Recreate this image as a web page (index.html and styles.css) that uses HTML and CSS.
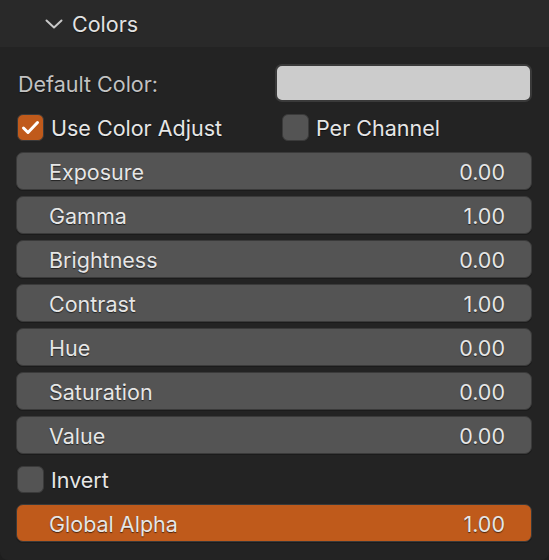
FILE: index.html
```html
<!DOCTYPE html>
<html lang="en">
<head>
  <meta charset="UTF-8">
  <title>Colors</title>
  <link rel="stylesheet" href="styles.css">
</head>
<body>
  <div class="panel">
    <!-- Panel header -->
    <div class="panel-header">
      <svg class="chevron" width="18" height="10" viewBox="0 0 18 10">
        <path d="M1.5 1.5 L9 8.5 L16.5 1.5" fill="none" stroke="#c8c8c8" stroke-width="2" stroke-linecap="round" stroke-linejoin="round"/>
      </svg>
      <span class="panel-title">Colors</span>
    </div>

    <div class="panel-body">
      <div class="row">
        <div class="left"><span class="muted">Default Color:</span></div>
        <div class="right"><div class="swatch"></div></div>
      </div>

      <div class="row">
        <div class="left">
          <span class="check on">
            <svg width="19" height="15" viewBox="0 0 19 15">
              <path d="M2.5 8 L7 12.5 L16.5 2.5" fill="none" stroke="#fff" stroke-width="3" stroke-linecap="round" stroke-linejoin="round"/>
            </svg>
          </span>
          <span class="check-label">Use Color Adjust</span>
        </div>
        <div class="right">
          <span class="check second"></span>
          <span class="check-label">Per Channel</span>
        </div>
      </div>

      <div class="slider"><span>Exposure</span><span>0.00</span></div>
      <div class="slider"><span>Gamma</span><span>1.00</span></div>
      <div class="slider"><span>Brightness</span><span>0.00</span></div>
      <div class="slider"><span>Contrast</span><span>1.00</span></div>
      <div class="slider"><span>Hue</span><span>0.00</span></div>
      <div class="slider"><span>Saturation</span><span>0.00</span></div>
      <div class="slider"><span>Value</span><span>0.00</span></div>

      <div class="row">
        <div class="left">
          <span class="check"></span>
          <span class="check-label">Invert</span>
        </div>
      </div>

      <div class="slider active"><span>Global Alpha</span><span>1.00</span></div>
    </div>
  </div>
</body>
</html>
```

FILE: styles.css
```css
body {
  margin: 0;
  background-color: #1e1e1e;
  font-family: Inter, "Noto Sans", sans-serif;
  font-size: 21.5px;
  color: #e6e6e6;
}

.panel {
  width: 549px;
  height: 560px;
  background-color: #232323;
  border-radius: 0 0 8px 8px;
  overflow: hidden;
}

.panel-header {
  height: 47px;
  background-color: #292929;
  display: flex;
  align-items: center;
  padding-left: 45px;
  box-sizing: border-box;
}

.chevron {
  margin-right: 9px;
  margin-top: 1px;
}

.panel-title {
  color: #e2e2e2;
  text-shadow: 0 1px 1px rgba(0, 0, 0, 0.6);
}

.panel-body {
  padding: 17px 17px 0 16px;
  display: flex;
  flex-direction: column;
  gap: 6px;
}

.row {
  height: 38px;
  display: flex;
  align-items: center;
}

.left {
  width: 259px;
  display: flex;
  align-items: center;
}

.right {
  flex: 1;
  display: flex;
  align-items: center;
}

.muted {
  margin-left: 2px;
  padding-top: 2px;
  color: #c2c2c2;
  text-shadow: 0 1px 1px rgba(0, 0, 0, 0.6);
}

.swatch {
  width: 100%;
  height: 38px;
  box-sizing: border-box;
  background-color: #cccccc;
  border: 2px solid #3a3a3a;
  border-radius: 7px;
}

.check {
  width: 27px;
  height: 27px;
  box-sizing: border-box;
  margin-left: 1px;
  background-color: #545454;
  border: 1px solid #3a3a3a;
  border-radius: 6px;
  display: flex;
  align-items: center;
  justify-content: center;
}

.check.on {
  background-color: #c05a1b;
}

.check.second {
  margin-left: 7px;
}

.check-label {
  margin-left: 7px;
  padding-top: 1px;
  text-shadow: 0 1px 1px rgba(0, 0, 0, 0.6);
}

.slider {
  height: 38px;
  box-sizing: border-box;
  background-color: #545454;
  border: 1px solid #3a3a3a;
  border-radius: 7px;
  box-shadow: 0 1px 0 #1b1b1b;
  display: flex;
  align-items: center;
  justify-content: space-between;
  padding: 1px 26px 0 32px;
  text-shadow: 0 1px 1px rgba(0, 0, 0, 0.6);
}

.slider.active {
  background-color: #bf5a1b;
}
```
